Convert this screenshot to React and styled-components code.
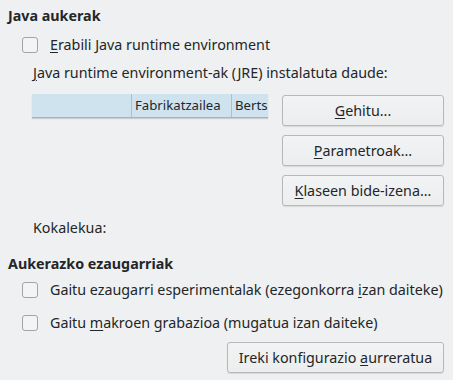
import React from 'react';
import styled, { createGlobalStyle } from 'styled-components';

const Global = createGlobalStyle`
  html, body {
    margin: 0;
    background: #eff0f1;
  }
  body {
    font-family: "Noto Sans", "Open Sans", sans-serif;
    font-size: 14.3px;
    color: #232629;
  }
`;

const Page = styled.div`
  width: 453px;
  height: 380px;
  box-sizing: border-box;
  padding: 7px 9px 0 8px;
  display: flex;
  flex-direction: column;
`;

const Title = styled.div`
  font-weight: bold;
  line-height: 18px;
  margin-top: ${p => p.$top || 0}px;
`;

const CheckRow = styled.label`
  display: flex;
  align-items: center;
  gap: 12px;
  height: 18px;
  margin-left: 14px;
  margin-top: ${p => p.$top || 0}px;
  line-height: 18px;
  white-space: nowrap;
`;

const Box = styled.span`
  width: 14px;
  height: 14px;
  border: 1px solid #a2a4a6;
  border-radius: 3px;
  background: #f3f4f5;
  flex: none;
`;

const Text = styled.div`
  margin-left: 25px;
  line-height: 18px;
  margin-top: ${p => p.$top || 0}px;
`;

const U = styled.span`
  text-decoration: underline;
  text-underline-offset: 2px;
`;

const Main = styled.div`
  display: flex;
  justify-content: space-between;
  margin-top: 12px;
  margin-left: 24px;
`;

const Table = styled.div`
  width: 236px;
  height: 23px;
  display: flex;
  background: #cfe3ef;
  border-bottom: 1px solid #aeb0b2;
  box-shadow: 0 1px 1px rgba(0, 0, 0, 0.15);
  overflow: hidden;
`;

const Col = styled.div`
  flex: none;
  width: ${p => p.$w}px;
  box-sizing: border-box;
  padding-left: 3px;
  font-size: 13.2px;
  line-height: 23px;
  border-right: 1px solid #a8c0cf;
  white-space: nowrap;
  overflow: hidden;
`;

const Buttons = styled.div`
  display: flex;
  flex-direction: column;
  gap: 9px;
  margin-top: 1px;
`;

const Button = styled.button`
  font: inherit;
  color: inherit;
  width: ${p => p.$w || 162}px;
  height: 31px;
  border: 1px solid #b6b8ba;
  border-radius: 3px;
  background: linear-gradient(#f2f3f4, #eceded);
  box-shadow: 0 1px 1px rgba(0, 0, 0, 0.1);
  padding: 0;
  white-space: nowrap;
`;

const Footer = styled.div`
  display: flex;
  justify-content: flex-end;
  margin-top: 10px;
`;

export default function App() {
  return (
    <>
      <Global />
      <Page>
        <Title>Java aukerak</Title>
        <CheckRow $top={11}>
          <Box />
          <span><U>E</U>rabili Java runtime environment</span>
        </CheckRow>
        <Text $top={10}><U>J</U>ava runtime environment-ak (JRE) instalatuta daude:</Text>
        <Main>
          <Table>
            <Col $w={100}></Col>
            <Col $w={100}>Fabrikatzailea</Col>
            <Col $w={60}>Bertsioa</Col>
          </Table>
          <Buttons>
            <Button><U>G</U>ehitu...</Button>
            <Button><U>P</U>arametroak...</Button>
            <Button><U>K</U>laseen bide-izena...</Button>
          </Buttons>
        </Main>
        <Text $top={13}>Kokalekua:</Text>
        <Title $top={18}>Aukerazko ezaugarriak</Title>
        <CheckRow $top={8}>
          <Box />
          <span>Gaitu ezaugarri esperimentalak (ezegonkorra <U>i</U>zan daiteke)</span>
        </CheckRow>
        <CheckRow $top={15}>
          <Box />
          <span>Gaitu <U>m</U>akroen grabazioa (mugatua izan daiteke)</span>
        </CheckRow>
        <Footer>
          <Button $w={217}>Ireki konfigurazio <U>a</U>urreratua</Button>
        </Footer>
      </Page>
    </>
  );
}
